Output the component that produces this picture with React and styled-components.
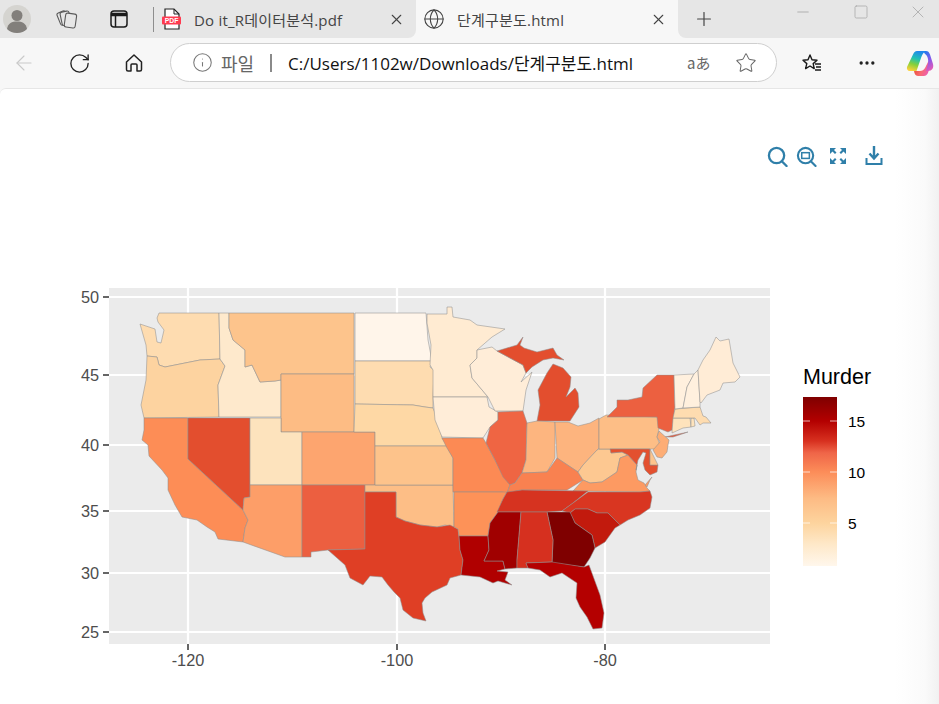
import React from "react";
import styled, { createGlobalStyle } from "styled-components";
import { Globe, X, Plus, Minus, Square, RotateCw, Info, Star, Ellipsis, ArrowLeft } from "lucide-react";

const Global = createGlobalStyle`
  html, body { margin: 0; padding: 0; background: #f7f7f7; overflow: hidden; }
  body { font-family: "Open Sans", "Noto Sans CJK KR", sans-serif; }
`;

const Browser = styled.div`
  width: 939px; height: 704px; display: flex; flex-direction: column; overflow: hidden;
`;
const TabStrip = styled.div`
  display: flex; height: 38px; flex: none; background: #f7f7f7;
`;
const StripLeft = styled.div`
  width: 416px; background: #e6e6e6; border-bottom-right-radius: 8px; display: flex; align-items: center; flex: none;
`;
const StripRight = styled.div`
  flex: 1; background: #e6e6e6; border-bottom-left-radius: 8px; display: flex; align-items: center;
`;
const ActiveTab = styled.div`
  width: 262px; flex: none; display: flex; align-items: center; color: #333;
`;
const Avatar = styled.svg`
  width: 28px; height: 28px; margin-left: 3px; flex: none;
`;
const Slot = styled.div`
  width: ${p => p.$w}px; margin-left: ${p => p.$ml || 0}px; flex: none; display: flex; align-items: center; justify-content: center; color: ${p => p.$c || "#222"};
`;
const WindowButton = styled(Slot)`
  align-self: flex-start; margin-top: 3px; height: 18px;
`;
const Divider = styled.div`
  width: 1px; height: 25px; background: #8e8e8e; margin-left: 24px; flex: none;
`;
const TabTitle = styled.span`
  font-size: 15px; color: #444; white-space: nowrap; width: ${p => p.$w}px; margin-left: ${p => p.$ml}px; flex: none;
  font-family: "Open Sans", "Noto Sans CJK KR", sans-serif; letter-spacing: 0.2px;
`;
const Toolbar = styled.div`
  height: 50px; flex: none; background: #f7f7f7; display: flex; align-items: center;
`;
const AddressBar = styled.div`
  width: 607px; height: 39px; box-sizing: border-box; margin-left: 25px; margin-top: -1px; border: 1px solid #cfcfcf; border-radius: 20px;
  background: #fff; display: flex; align-items: center; flex: none;
`;
const Scheme = styled.span`
  font-size: 18px; color: #666; margin-left: 8px; width: 36px; white-space: nowrap;
`;
const Sep = styled.span`
  width: 2px; height: 18px; background: #8a8a8a; margin-left: 13px;
`;
const Url = styled.span`
  font-size: 17px; color: #111; margin-left: 16px; width: 399px; white-space: nowrap;
`;
const Translate = styled.span`
  font-size: 15px; color: #666; width: 26px; white-space: nowrap; font-family: "Noto Sans CJK JP", sans-serif;
`;
const Content = styled.main`
  flex: 1; background: linear-gradient(90deg, #fff 0, #fff 895px, #fafafa 925px, #f1f1f1 939px);
  border-top: 1px solid #e6e6e6; border-top-left-radius: 6px; display: flex; flex-direction: column;
`;
const ModeBar = styled.div`
  display: flex; align-items: center; margin-top: 56px; padding-left: 767px; height: 22px;
`;
const ModeIcon = styled.svg`
  width: ${p => p.$w}px; height: ${p => p.$h || 22}px; margin-right: ${p => p.$mr || 0}px; flex: none;
  fill: none; stroke: #2f7fa9;
`;
const FillIcon = styled(ModeIcon)`
  fill: #2f7fa9; stroke: none;
`;
const ChartBox = styled.div`
  margin-top: 113px; margin-left: 60px; width: 840px; height: 400px;
`;
const ChartSvg = styled.svg`
  display: block; width: 840px; height: 400px;
`;
const AxisText = styled.text`
  font-family: "Liberation Sans", Arial, sans-serif; font-size: 16.3px; fill: #4d4d4d;
`;
const LegendTitle = styled.text`
  font-family: "Liberation Sans", Arial, sans-serif; font-size: 21.5px; fill: #000;
`;
const LegendLabel = styled.text`
  font-family: "Liberation Sans", Arial, sans-serif; font-size: 15.5px; fill: #000;
`;

const states = [
  ["WA","#fedcb0","159,313 219,313 220,359 200,360 180,364 165,367 159,365 157,357 147,356 146,345 140,324 155,329 157,342 161,343 164,330 158,322 157,318"],
  ["OR","#fdd3a0","147,356 157,357 159,365 165,367 180,364 200,360 220,359 225,366 218,385 219,417 144,418 141,405 143,395 146,380"],
  ["CA","#fd8d56","144,418 188,418 188,459 243,510 248,520 245,528 243,542 218,539 215,532 207,527 197,520 182,517 175,505 168,490 168,478 162,470 149,456 148,445 142,440 144,430"],
  ["NV","#e34e2e","188,418 250,418 250,497 244,498 243,510 188,459"],
  ["ID","#fee9cc","219,313 229,313 229,328 233,340 245,350 245,367 252,365 260,382 275,381 281,380 281,417 219,417 218,385 225,366 220,359"],
  ["MT","#fdc48c","229,313 354,313 354,374 281,374 281,380 275,381 260,382 252,365 245,367 245,350 233,340 229,328"],
  ["WY","#fdbc84","281,374 354,374 354,432 281,432"],
  ["UT","#fde3bd","250,418 281,418 281,432 302,432 302,485 250,485"],
  ["CO","#fda56f","302,432 375,432 375,485 302,485"],
  ["AZ","#fd9e68","250,485 302,485 302,557 285,557 243,542 245,528 248,520 243,510 244,498 250,497"],
  ["NM","#ec5f40","302,485 365,485 365,549 328,550 311,552 311,557 302,557"],
  ["OK","#fdbe86","365,485 453,485 454,527 445,525 437,527 420,525 405,521 396,517 396,492 365,492"],
  ["TX","#df3f25","365,492 396,492 396,517 405,521 420,525 437,527 450,525 458,529 459,537 460,550 463,560 461,575 450,578 447,585 432,592 425,598 422,603 423,613 426,621 413,618 403,610 400,598 394,592 388,585 382,577 370,576 363,585 350,578 345,565 328,550 365,549"],
  ["ND","#fff5ea","355,313 426,313 428,340 432,361 355,361"],
  ["SD","#fedcb0","355,361 432,361 430,367 434,370 433,397 433,408 425,407 413,405 355,404"],
  ["NE","#fed8a5","355,404 413,405 425,407 433,408 439,423 442,438 447,446 375,446 375,432 354,432"],
  ["KS","#fdc38b","375,446 447,446 453,458 453,485 375,485"],
  ["MN","#ffebd2","427,314 447,314 447,307 452,307 453,317 470,320 477,325 505,329 492,337 477,350 477,358 470,365 472,378 488,397 433,397 433,370 430,365 431,345 427,323"],
  ["IA","#ffedd8","433,397 487,397 489,407 498,412 498,420 490,427 483,438 442,437 435,420"],
  ["MO","#fc8a54","442,438 483,438 486,443 495,460 503,475 510,485 507,493 502,492 453,492 453,458 447,448"],
  ["AR","#fd9258","454,492 501,492 507,492 503,499 498,512 490,523 488,536 459,536 458,529 454,527"],
  ["LA","#b00000","459,536 488,536 489,550 484,561 503,561 505,569 497,571 508,572 505,580 512,585 498,581 493,583 480,577 461,575 463,560 460,550"],
  ["WI","#ffedd8","477,350 492,347 497,351 523,365 526,373 521,382 532,372 526,390 523,411 495,411 488,397 472,378 470,365 477,358"],
  ["MI1","#e34e2e","497,351 517,345 523,337 520,345 524,348 537,352 553,348 557,355 564,360 553,358 543,360 532,367 526,373 523,365"],
  ["MI2","#e34e2e","553,364 563,368 571,377 570,387 566,397 575,388 578,393 579,407 570,421 537,421 540,405 538,390 547,373"],
  ["IL","#ef6543","498,412 523,411 527,423 526,460 522,473 515,483 510,485 503,477 495,460 486,443 490,427 498,420"],
  ["IN","#fdb57f","527,423 537,421 555,422 555,458 547,472 522,473 526,460"],
  ["OH","#fdb47e","555,422 568,422 578,426 590,423 599,418 599,448 583,465 578,472 557,458"],
  ["KY","#f98150","507,493 510,485 515,483 522,473 547,472 557,458 578,472 583,480 567,490 522,490"],
  ["WV","#fdc891","578,472 583,465 597,450 599,449 611,449 611,453 622,452 628,455 620,458 617,472 602,482 590,483 583,480"],
  ["VA","#fd9a62","573,491 583,480 590,483 602,482 617,472 620,458 628,455 637,465 636,472 638,480 644,483 647,488 650,491 640,492"],
  ["VAE","#fd9a62","652,477 650,480 647,487 645,485"],
  ["TN","#d63320","497,512 503,499 507,492 522,490 588,491 573,503 562,511 547,512"],
  ["NC","#d93621","588,492 640,492 650,491 652,497 650,508 640,515 628,520 620,525 608,513 597,513 588,509 575,509 570,513 562,511 573,503"],
  ["SC","#c21a0d","570,513 575,509 588,509 597,513 608,513 620,525 615,528 605,542 595,548 592,535 575,523"],
  ["GA","#7f0000","547,512 570,512 575,523 592,535 595,548 590,558 584,567 552,563 553,540"],
  ["MS","#a00000","498,512 521,512 517,560 517,568 505,569 503,561 484,561 489,550 488,536 490,523"],
  ["AL","#d6301f","521,512 547,512 553,540 552,562 526,563 528,568 523,568 517,568 517,560"],
  ["FL","#b40000","526,563 552,562 584,567 589,565 600,595 604,613 602,628 593,629 587,617 580,607 576,598 577,583 562,573 550,577 540,570 528,568"],
  ["PA","#fdbe86","599,419 606,415 657,417 660,425 657,437 660,445 655,449 599,449"],
  ["NY","#ec6040","607,417 617,407 617,400 628,400 642,397 643,388 657,375 674,375 675,407 672,430 668,432 658,428 657,417"],
  ["LI","#e85a3c","665,437 688,432 673,437"],
  ["NJ","#fdad75","659,431 669,440 668,445 667,452 662,458 657,457 653,450 660,442 657,437"],
  ["MD","#e3502f","610,449 650,449 650,465 658,465 657,472 650,475 645,470 643,463 646,453 643,452 638,460 636,470 637,465 628,455 622,452 611,453"],
  ["DE","#fdc48c","650,449 658,465 650,465"],
  ["CT","#fee3bc","673,418 690,418 691,427 683,428 672,433"],
  ["RI","#fee3bc","691,418 694,418 695,426 691,427"],
  ["MA","#fedcb0","675,409 700,407 703,416 706,417 711,423 703,423 700,425 695,418 673,418"],
  ["VT","#fff0de","674,375 694,374 687,387 683,408 675,409"],
  ["NH","#fff0de","694,374 698,370 700,402 700,407 683,408 687,387"],
  ["ME","#ffecd6","698,370 703,360 710,350 716,337 720,341 729,339 733,363 740,377 735,382 723,383 720,390 707,395 701,403 700,402"],
];

const yTicks = [[297,"50"],[375,"45"],[445,"40"],[511,"35"],[573,"30"],[632,"25"]];
const xTicks = [[188,"-120"],[397,"-100"],[605,"-80"]];
const legendTicks = [[421,"15"],[472,"10"],[523,"5"]];

function Copilot() {
  return (
    <svg width="28" height="28" viewBox="0 0 28 28">
      <defs>
        <linearGradient id="cpLeft" x1="0.6" y1="0" x2="0.3" y2="1"><stop offset="0" stopColor="#1e86ee"/><stop offset=".38" stopColor="#1fc2b4"/><stop offset=".68" stopColor="#86d03a"/><stop offset="1" stopColor="#fbd13a"/></linearGradient>
        <linearGradient id="cpRight" x1="0.3" y1="0" x2="0.7" y2="1"><stop offset="0" stopColor="#2478ee"/><stop offset=".5" stopColor="#8a58ea"/><stop offset="1" stopColor="#e85cb4"/></linearGradient>
        <linearGradient id="cpBottom" x1="0" y1="0.3" x2="1" y2="0.7"><stop offset="0" stopColor="#e8492f"/><stop offset=".5" stopColor="#f86a70"/><stop offset="1" stopColor="#ea5cc0"/></linearGradient>
      </defs>
      <path d="M8 21 C8 24 9.500 27 12 27 H18 C21 27 22.500 24 23 20 L25 12 C25 10 23 11 22 13 L19 19 C18 21 16 22 14 22 H10 Z" fill="url(#cpBottom)"/>
      <path d="M17 2 H20 C22 2 23 3 24 5.500 L27 15 C28 19 26 22 22 22 H20 L22 15 C23 10 21 6 19 5 Z" fill="url(#cpRight)"/>
      <path d="M11 2 H20 C17.500 3 16 6 15 9 L10.500 22 H4 C1.500 22 0.500 20 1 18 L7 5.500 C8 3.500 9 2 11 2 Z" fill="url(#cpLeft)"/>
    </svg>
  );
}

export default function App() {
  return (
    <Browser>
      <Global />
      <TabStrip>
        <StripLeft>
          <Avatar viewBox="0 0 28 28">
            <circle cx="14" cy="14" r="14" fill="#d5d4d0" />
            <circle cx="14" cy="10.5" r="5.5" fill="#827f7b" />
            <path d="M4 24c1-6 5-7.5 10-7.5s9 1.500 10 7.500c-2.500 2.500-6 4-10 4s-7.500-1.500-10-4z" fill="#827f7b" />
          </Avatar>
          <Slot $w={24} $ml={24}>
            <svg width="22" height="22" viewBox="0 0 22 22" fill="#e6e6e6" stroke="#5a5a5a" strokeWidth="1.100">
              <rect x="2.500" y="3.500" width="9" height="13" rx="2" transform="rotate(-22 7 10)" />
              <rect x="5" y="3.500" width="9" height="13.500" rx="2" transform="rotate(-12 9.500 10)" />
              <rect x="9" y="5.500" width="11" height="14" rx="2" transform="rotate(8 14 12)" />
            </svg>
          </Slot>
          <Slot $w={20} $ml={30}>
            <svg width="20" height="20" viewBox="0 0 20 20" fill="none" stroke="#1b1b1b" strokeWidth="1.500">
              <rect x="2" y="2" width="16" height="16" rx="3" />
              <path d="M2 5.500h16" strokeWidth="3.500" />
              <path d="M6.500 6v12" />
            </svg>
          </Slot>
          <Divider />
          <Slot $w={20} $ml={8}>
            <svg width="20" height="22" viewBox="0 0 20 22">
              <path d="M3 1h9l5 5v15H3z" fill="#fff" stroke="#222" strokeWidth="1.200" />
              <path d="M12 1v5h5" fill="none" stroke="#222" strokeWidth="1" />
              <rect x="0" y="8.500" width="19" height="8" rx="1" fill="#ff3b50" />
              <text x="9.500" y="15" textAnchor="middle" fontSize="6.800" fontWeight="700" fill="#fff" fontFamily="Liberation Sans">PDF</text>
            </svg>
          </Slot>
          <TabTitle $w={193} $ml={12}>Do it_R데이터분석.pdf</TabTitle>
          <Slot $w={18} $c="#444"><X size={17} strokeWidth={1.500} /></Slot>
        </StripLeft>
        <ActiveTab>
          <Slot $w={24} $ml={6} $c="#444"><Globe size={22} strokeWidth={1.200} /></Slot>
          <TabTitle $w={192} $ml={11}>단계구분도.html</TabTitle>
          <Slot $w={18} $c="#444"><X size={17} strokeWidth={1.500} /></Slot>
        </ActiveTab>
        <StripRight>
          <Slot $w={22} $ml={15} $c="#444"><Plus size={22} strokeWidth={1.300} /></Slot>
          <WindowButton $w={20} $ml={78} $c="#aaa"><Minus size={18} strokeWidth={1.200} /></WindowButton>
          <WindowButton $w={20} $ml={38} $c="#aaa"><Square size={16} strokeWidth={1.200} /></WindowButton>
          <WindowButton $w={20} $ml={37} $c="#aaa"><X size={20} strokeWidth={1} /></WindowButton>
        </StripRight>
      </TabStrip>
      <Toolbar>
        <Slot $w={24} $ml={12} $c="#c9c9c9"><ArrowLeft size={26} strokeWidth={1.100} /></Slot>
        <Slot $w={24} $ml={31} $c="#222"><RotateCw size={23} strokeWidth={1.400} /></Slot>
        <Slot $w={22} $ml={32}>
          <svg width="20" height="20" viewBox="0 0 20 20" fill="none" stroke="#222" strokeWidth="1.500" strokeLinejoin="round">
            <path d="M2.500 9 10 2l7.500 7v7.500a1.500 1.500 0 0 1-1.500 1.500h-3v-6a1 1 0 0 0-1-1H8a1 1 0 0 0-1 1v6H4a1.500 1.500 0 0 1-1.500-1.500z" />
          </svg>
        </Slot>
        <AddressBar>
          <Slot $w={22} $ml={20} $c="#777"><Info size={21} strokeWidth={1.200} /></Slot>
          <Scheme>파일</Scheme>
          <Sep />
          <Url>C:/Users/1102w/Downloads/단계구분도.html</Url>
          <Translate>aあ</Translate>
          <Slot $w={22} $ml={22} $c="#666"><Star size={22} strokeWidth={1.100} /></Slot>
        </AddressBar>
        <Slot $w={24} $ml={23}>
          <svg width="22" height="22" viewBox="0 0 22 22" fill="none" stroke="#1a1a1a" strokeWidth="1.400" strokeLinejoin="round">
            <path d="M9 3l2 4.800 5 .5-3.800 3.300 1 5-4.200-2.600-4.400 2.600 1.200-5L2 8.300l5-.5z" />
            <path d="M14 12h6M15 15h5M14 18h6" />
          </svg>
        </Slot>
        <Slot $w={24} $ml={31} $c="#222"><Ellipsis size={20} strokeWidth={2} /></Slot>
        <Slot $w={28} $ml={27}><Copilot /></Slot>
      </Toolbar>
      <Content>
        <ModeBar>
          <ModeIcon $w={21} $h={21} $mr={8} viewBox="0 0 22 22" strokeWidth="2.400">
            <circle cx="10" cy="10" r="8" />
            <path d="M15.500 16l5 5" strokeLinecap="round" />
          </ModeIcon>
          <ModeIcon $w={21} $h={21} $mr={11} viewBox="0 0 22 22" strokeWidth="2.200">
            <circle cx="10" cy="10" r="8" />
            <rect x="6" y="7" width="8" height="6" strokeWidth="1.600" />
            <path d="M15.500 16l5 5" strokeLinecap="round" />
          </ModeIcon>
          <FillIcon $w={20} $mr={17} viewBox="0 0 20 22">
            <path d="M2 3h6L6 5l2.500 2.500-1.500 1.500L4.500 6.500 2 9zM18 3h-6l2 2-2.500 2.500 1.500 1.500 2.500-2.500L18 9zM2 19h6l-2-2 2.500-2.500L7 13l-2.500 2.500L2 13zM18 19h-6l2-2-2.500-2.500L13 13l2.500 2.500L18 13z" />
          </FillIcon>
          <ModeIcon $w={18} viewBox="0 0 18 22" strokeWidth="2">
            <path d="M9 1v12M4.500 8.500 9 13.500l4.500-5" strokeWidth="2.400" />
            <path d="M1.500 13v6h15v-6" />
          </ModeIcon>
        </ModeBar>
        <ChartBox>
          <ChartSvg viewBox="60 280 840 400">
            <defs>
              <linearGradient id="orrd" x1="0" y1="0" x2="0" y2="1">
                <stop offset="0" stopColor="#7f0000" />
                <stop offset=".142" stopColor="#b30000" />
                <stop offset=".26" stopColor="#d7301f" />
                <stop offset=".33" stopColor="#ef6548" />
                <stop offset=".444" stopColor="#fc8d59" />
                <stop offset=".6" stopColor="#fdbb84" />
                <stop offset=".746" stopColor="#fdd49e" />
                <stop offset=".87" stopColor="#fee8c8" />
                <stop offset="1" stopColor="#fff7ec" />
              </linearGradient>
            </defs>
            <rect x="109" y="288" width="661" height="356" fill="#ebebeb" />
            {yTicks.map(([y]) => <line key={y} x1="109" x2="770" y1={y} y2={y} stroke="#fff" strokeWidth="2.200" />)}
            {xTicks.map(([x]) => <line key={x} x1={x} x2={x} y1="288" y2="644" stroke="#fff" strokeWidth="2.200" />)}
            {states.map(([n, fill, pts]) => (
              <polygon key={n} points={pts} fill={fill} stroke="#8f8f8f" strokeOpacity=".6" strokeWidth="0.900" strokeLinejoin="round" />
            ))}
            {yTicks.map(([y, t]) => (
              <g key={t}>
                <line x1="103" x2="109" y1={y} y2={y} stroke="#333" strokeWidth="1.500" />
                <AxisText x="99" y={y + 6} textAnchor="end">{t}</AxisText>
              </g>
            ))}
            {xTicks.map(([x, t]) => (
              <g key={t}>
                <line x1={x} x2={x} y1="644" y2="650" stroke="#333" strokeWidth="1.500" />
                <AxisText x={x} y="666" textAnchor="middle">{t}</AxisText>
              </g>
            ))}
            <LegendTitle x="803" y="384">Murder</LegendTitle>
            <rect x="803" y="397" width="34" height="169" fill="url(#orrd)" />
            {legendTicks.map(([y, t]) => (
              <g key={t}>
                <line x1="803" x2="810" y1={y} y2={y} stroke="#fff" strokeOpacity=".7" />
                <line x1="830" x2="837" y1={y} y2={y} stroke="#fff" strokeOpacity=".7" />
                <LegendLabel x="848" y={y + 6}>{t}</LegendLabel>
              </g>
            ))}
          </ChartSvg>
        </ChartBox>
      </Content>
    </Browser>
  );
}
